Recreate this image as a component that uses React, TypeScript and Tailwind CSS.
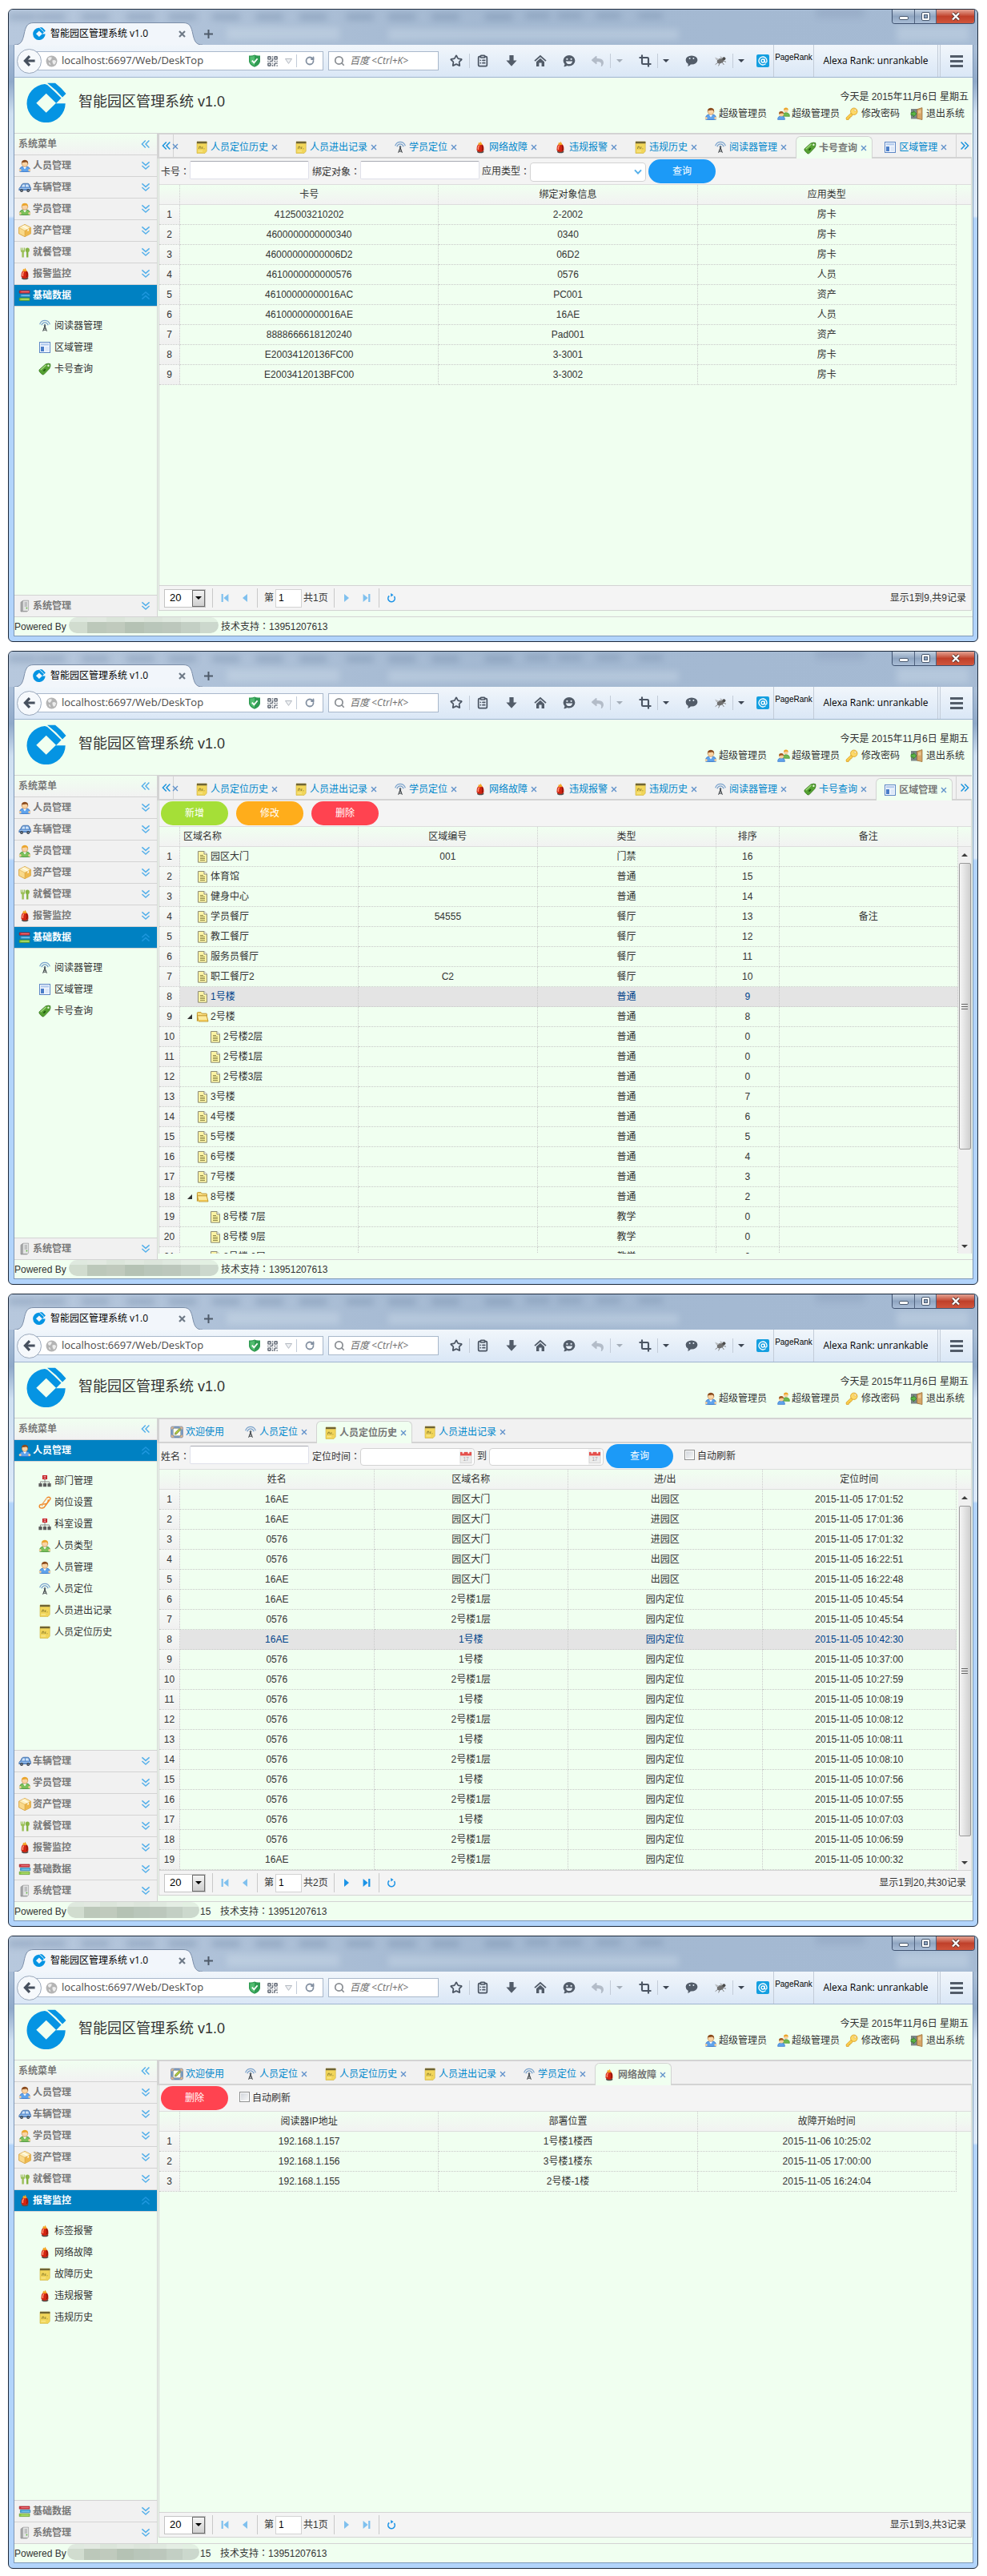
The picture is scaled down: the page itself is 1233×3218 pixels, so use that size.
import React from "react";
import { ClipboardList, Crop, QrCode, RotateCw, Search, Star, AtSign } from "lucide-react";
import { FaReply } from "react-icons/fa";

/* ---------- icons ---------- */

type Glyph = () => React.ReactElement;

const Svg = ({ children, box = "0 0 16 16", className = "size-4 shrink-0" }: { children: React.ReactNode; box?: string; className?: string }) => (
  <svg viewBox={box} className={className} fill="none" aria-hidden="true">
    {children}
  </svg>
);

const Logo = ({ className }: { className: string }) => (
  <Svg box="0 0 50 50" className={className}>
    <path
      fill="#0594e3"
      fillRule="evenodd"
      d="M23 2A24.1 24.1 0 1 0 48.7 26.3H37L43.5 19.5Q34 10 26 3ZM24.7 13.7L37 25.7L24.7 37.7L12.3 25.7Z"
    />
    <path fill="#0594e3" d="M26 .8H36Q44 7 49.5 14L45 18.5Q37 9 29 3.2Z" />
  </Svg>
);

const figure = (hair: string, body: string, edge: string): Glyph => () => (
  <Svg>
    <path d="M1.6 15.2Q1 9.6 5.4 9.2H10.6Q15 9.6 14.4 15.2Q8 16 1.6 15.2Z" fill={body} stroke={edge} strokeWidth=".8" />
    <path d="M5.8 9.2L8 12.4L10.2 9.2Z" fill="#fff" />
    <circle cx="2.2" cy="13.6" r="1.5" fill="#f5cf9f" />
    <circle cx="13.8" cy="13.6" r="1.5" fill="#f5cf9f" />
    <circle cx="8" cy="5.6" r="3.7" fill="#f9d3a3" stroke="#b9783c" strokeWidth=".5" />
    <path d="M3.9 6.4Q3.2.8 8 .7Q12.8.8 12.1 6.4Q11.6 3.8 9.8 3.6Q6 4.2 5 3.8Q4.2 4.6 3.9 6.4Z" fill={hair} />
  </Svg>
);
const UserBlue = figure("#8a4a1c", "#5fa3ec", "#2b6cc4");
const UserGreen = figure("#eba52a", "#7cc05a", "#3e8a2c");

const Users: Glyph = () => (
  <Svg>
    <circle cx="10.8" cy="3.6" r="2.8" fill="#f7cf9b" />
    <path d="M8 3.4Q8 .4 10.8.4Q13.8.4 13.6 3.6Q12 2 8 3.4Z" fill="#eba52a" />
    <path d="M7 11.2Q6.6 6.8 10.8 6.8Q15.6 6.8 15.4 11.4Z" fill="#72b850" stroke="#458f30" strokeWidth=".6" />
    <path d="M.6 15.4Q.4 11 5 11Q9.6 11 9.4 15.4Z" fill="#5fa3ec" stroke="#2b6cc4" strokeWidth=".6" />
    <circle cx="5" cy="8.4" r="3" fill="#f7cf9b" />
    <path d="M2 8.4Q1.8 5 5 5Q8.2 5 8 8.4Q6.8 6.6 2 8.4Z" fill="#a0561f" />
  </Svg>
);
const Car: Glyph = () => (
  <Svg>
    <path d="M.8 11.6Q.4 8.4 2.6 7.8L4.4 4.2Q5 3.2 7 3.2H11.6Q13 3.2 13.6 4.4L14.8 7.4Q15.8 8 15.4 11.6Z" fill="#5b8fd0" stroke="#34619c" strokeWidth=".7" />
    <path d="M4 7.6L5.4 4.6H8V7.6ZM9 4.6H12.2L13.2 7.6H9Z" fill="#cfe3f7" />
    <path d="M1.4 9.4H15" stroke="#a9cbf0" />
    <circle cx="4" cy="12" r="1.9" fill="#2e3742" />
    <circle cx="12.2" cy="12" r="1.9" fill="#2e3742" />
    <circle cx="4" cy="12" r=".7" fill="#c9d2dc" />
    <circle cx="12.2" cy="12" r=".7" fill="#c9d2dc" />
  </Svg>
);
const Box: Glyph = () => (
  <Svg>
    <path d="M8 .4L15.4 4.2V11.9L8 15.7L.6 11.9V4.2Z" fill="#f9d98a" stroke="#d39a32" strokeWidth=".8" />
    <path d="M8 .8L15 4.5L8 8.2L1 4.5Z" fill="#fdeebb" />
    <path d="M8 8.2L15 4.5V11.7L8 15.2Z" fill="#eeb84c" />
    <path d="M4.4 2.8L11.4 6.4V9L13 8.2V5.4L6 1.8Z" fill="#fffbe8" />
    <path d="M1 4.5L8 8.2L15 4.5M8 8.2V15" stroke="#d39a32" strokeWidth=".5" />
  </Svg>
);
const Cutlery: Glyph = () => (
  <Svg>
    <path d="M2.8 2.6V6Q2.8 7.8 4.4 8.2V14.4H6.8V8.2Q8.2 7.8 8.2 6V2.6H7V5.4H6.1V2.6H5V5.4H4V2.6Z" fill="#9bc058" />
    <path d="M11.2 2.4Q13.9 2.6 13.9 5.4Q13.9 7.4 12.4 8V14.4H10V8Q8.8 7.4 8.8 5.4Q8.8 2.6 11.2 2.4Z" fill="#86b344" />
  </Svg>
);
const Alarm: Glyph = () => (
  <Svg>
    <ellipse cx="8.2" cy="13.4" rx="4.2" ry="1.8" fill="#55504c" />
    <path d="M3.6 11.6Q3.2 6.2 5.6 4.2H10.4Q12.8 6.2 12.4 11.6Q11.4 14 8 14Q4.6 14 3.6 11.6Z" fill="#d32412" />
    <path d="M5.4 11Q5 7.2 6.6 5.4" stroke="#ff9474" strokeWidth="1.5" />
    <path d="M10.4 12Q11.8 8.4 10.4 5.4" stroke="#86140a" strokeWidth="1.3" />
    <path d="M5.4 4.6L6 1.8L7.4 2.8L8.4.8L10.6 4.6Q8 5.8 5.4 4.6Z" fill="#f4a321" />
  </Svg>
);
const Books: Glyph = () => (
  <Svg>
    <path d="M1.2 2H14V5.2H1.2Z" fill="#d9323c" stroke="#8e1a22" strokeWidth=".6" />
    <path d="M2.4 6.6H14.8V9.8H2.4Z" fill="#42a9dd" stroke="#1c6f9e" strokeWidth=".6" />
    <path d="M1.2 11.2H14V14.6H1.2Z" fill="#8fce3e" stroke="#4f8a1c" strokeWidth=".6" />
    <path d="M3.4 3.6H13.4M4.4 8.2H14.2M3.4 12.9H13.4" stroke="#fff" strokeWidth=".7" opacity=".55" />
  </Svg>
);
const Server: Glyph = () => (
  <Svg>
    <path d="M3 3.2L6 1.2H12.6V13.4L10.4 15H3Z" fill="#a9aaab" stroke="#7c7d7e" strokeWidth=".6" />
    <path d="M6 1.6H12.4V14H6Z" fill="#e2e3e3" />
    <path d="M7.6 4H11M7.6 6H11M7.6 8H11" stroke="#8b8c8d" strokeWidth=".8" />
    <circle cx="10.4" cy="10.6" r=".9" fill="#58b431" />
  </Svg>
);
const Antenna: Glyph = () => (
  <Svg>
    <path d="M1.6 6.2Q3.4 1.4 8 1.4Q12.6 1.4 14.4 6.2M3.8 7.2Q5.2 3.8 8 3.8Q10.8 3.8 12.2 7.2" stroke="#7ba3cc" strokeWidth="1.2" />
    <circle cx="8" cy="7.2" r="1.2" fill="#5c6a76" />
    <path d="M8 8L5.6 14.8M8 8L10.4 14.8M7 11.2H9M6.2 13.2H9.8" stroke="#3b4045" strokeWidth="1" />
  </Svg>
);
const Layout: Glyph = () => (
  <Svg>
    <rect x="1.5" y="1.5" width="13" height="13" fill="#f4f8fe" stroke="#5c86c5" />
    <path d="M3 3H13V5.6H3Z" fill="#b6cdee" />
    <path d="M3 7H7V13H3Z" fill="#4a7dc8" />
    <path d="M8.4 7H13V13H8.4Z" fill="#dde8f8" />
  </Svg>
);
const Tag: Glyph = () => (
  <Svg>
    <path d="M1.2 8.8L8.8 2Q12.4.4 14.8 1.6Q15.6 4.6 13.8 7.4L7 14.6Q5.4 15.6 4 14.2L1.4 11.4Q.4 10 1.2 8.8Z" fill="#55a132" stroke="#2f7018" strokeWidth=".7" />
    <path d="M2.6 9.2L9.6 3" stroke="#a5dc80" strokeWidth="1.3" />
    <circle cx="12.4" cy="3.8" r="1.2" fill="#e9f6e1" />
    <path d="M6.4 10.6L8.8 8.2" stroke="#225711" strokeWidth="1.8" />
  </Svg>
);
const Notes: Glyph = () => (
  <Svg>
    <path d="M2 1.2H14.2V13L12 15.4H2Z" fill="#f2d65a" stroke="#cdb03a" strokeWidth=".6" />
    <path d="M2 .8H14.4V3.2H2Z" fill="#6f6434" />
    <path d="M4.4 10L5.2 6.8M5.2 7.4Q7.4 6 6.8 9.8M8.4 10L9 7.2M10.4 9.8H11.4" stroke="#7a6d24" strokeWidth=".8" />
    <path d="M3.4 12.8H9" stroke="#fbeea0" />
  </Svg>
);
const Org: Glyph = () => (
  <Svg>
    <path d="M5 1H11V6H5Z" fill="#c3141b" />
    <path d="M6.4 2.6H9.6M6.4 4.4H9.6" stroke="#fff" strokeWidth=".7" />
    <path d="M8 6V9M2.4 11.4V9H13.6V11.4M8 9V11.4" stroke="#8a8a8a" />
    <path d="M.4 11H4.6V15.2H.4ZM5.9 11H10.1V15.2H5.9ZM11.4 11H15.6V15.2H11.4Z" fill="#5c5c5c" />
  </Svg>
);
const Clip: Glyph = () => (
  <Svg>
    <path d="M10.4 2.2Q13.2.4 14.8 2.2Q15.4 3.4 13.8 5L7.4 13.8Q4.6 16 1.8 14.4Q.4 12.4 2.4 10.6L10 9.6Q12.6 8 12.2 4.4" stroke="#f08a2c" strokeWidth="1.5" />
    <path d="M10.4 2.4L4.6 10.4Q4 12 5.4 12.2" stroke="#f2a356" strokeWidth="1.3" />
  </Svg>
);
const Welcome: Glyph = () => (
  <Svg>
    <rect x=".8" y="1.2" width="14.4" height="13.6" rx="1" fill="#7fa3cf" stroke="#47658f" strokeWidth=".8" />
    <path d="M1 1.4L5 1.4L1 5ZM15 1.4V5L11 1.4ZM1 14.6V11L5 14.6ZM15 14.6H11L15 11Z" fill="#e8b88a" />
    <rect x="3.2" y="3.2" width="9.6" height="9.6" fill="#fdfdf3" stroke="#7e7e6c" strokeWidth=".6" />
    <path d="M5.4 11L6 8.6L11 3.6L12.6 5.2L7.6 10.4Z" fill="#b4d13e" stroke="#4f5a1c" strokeWidth=".6" />
  </Svg>
);
const KeyIcon: Glyph = () => (
  <Svg>
    <path d="M7 7.4L1 13.2L1.4 15.4H4.2V13.6H6V11.8H7.6L9 9.6Z" fill="#fbd04e" stroke="#d99a1e" strokeWidth=".8" />
    <circle cx="10.8" cy="5.2" r="4.2" fill="#fcd968" stroke="#d99a1e" strokeWidth=".8" />
    <circle cx="12.2" cy="3.8" r="1.2" fill="#fff" stroke="#d99a1e" strokeWidth=".5" />
  </Svg>
);
const Door: Glyph = () => (
  <Svg>
    <path d="M1 2H12V14.4H1Z" fill="#7b8587" />
    <path d="M8.6 2.6L15 .6V15.6L8.6 14Z" fill="#d7a768" stroke="#93652c" strokeWidth=".7" />
    <path d="M10 4.2L13.4 3.2V7.4L10 7.6Z" fill="#ecc893" />
    <path d="M1 6.6H4V4.4L8 8.2L4 12V9.8H1Z" fill="#5cb648" stroke="#2c7a1d" strokeWidth=".7" />
  </Svg>
);
const Page: Glyph = () => (
  <Svg>
    <path d="M2.5 1.5H10L13.5 5V15.2H2.5Z" fill="#fbf3a4" stroke="#8c8b77" />
    <path d="M10 1.5V5H13.5" fill="#fff" stroke="#8c8b77" />
    <path d="M5 6.5H9M5 8.5H11M5 10.5H11M5 12.5H11" stroke="#8d8748" />
  </Svg>
);
const Folder: Glyph = () => (
  <Svg>
    <path d="M1.4 13.8V3.4Q1.4 2.6 2.2 2.6H6L7.4 4.2H12.6Q13.4 4.2 13.4 5V7" fill="#f8dd80" stroke="#b98a1d" strokeWidth=".9" />
    <path d="M1.4 6.8H13.2L15 14H3.2Z" fill="#fcea9c" stroke="#b98a1d" strokeWidth=".9" />
    <path d="M3 12H14L14.4 13.5H3.4Z" fill="#efc54e" />
  </Svg>
);
const DateIcon: Glyph = () => (
  <Svg>
    <rect x="1" y="2" width="14" height="13.6" fill="#ececec" stroke="#c8c8c8" strokeWidth=".6" />
    <path d="M1 2H15V6.4H1Z" fill="#e5504c" />
    <path d="M4.6.4V3.8M11.4.4V3.8" stroke="#fff" strokeWidth="1.8" />
    <text x="8" y="13.2" fontSize="6.5" textAnchor="middle" fill="#a5a5a5" fontFamily="Liberation Sans">17</text>
  </Svg>
);

const Chevrons = ({ dir, color = "#56b0ea", className = "size-3 shrink-0" }: { dir: "left" | "right" | "up" | "down"; color?: string; className?: string }) => {
  const d = {
    left: "M5.8 1.4L1.4 6L5.8 10.6M10.4 1.4L6 6L10.4 10.6",
    right: "M1.6 1.4L6 6L1.6 10.6M6.2 1.4L10.6 6L6.2 10.6",
    up: "M1.4 6L6 2L10.6 6M1.4 10.6L6 6.6L10.6 10.6",
    down: "M1.4 1.4L6 5.4L10.6 1.4M1.4 6L6 10L10.6 6",
  }[dir];
  return (
    <Svg box="0 0 12 12" className={className}>
      <path d={d} stroke={color} strokeWidth="1.5" />
    </Svg>
  );
};

/* ---------- browser frame ---------- */

const Divider = ({ className }: { className: string }) => <span className={`w-px shrink-0 bg-[#c3ccd8] ${className}`} />;

const Caret = ({ color, className }: { color: string; className: string }) => (
  <Svg box="0 0 8 8" className={`h-2 w-2 shrink-0 ${className}`}>
    <path d="M0 2H8L4 6Z" fill={color} />
  </Svg>
);

const Smudges = () => (
  <svg className="absolute inset-0 h-full w-full" viewBox="0 0 1200 44" preserveAspectRatio="none" aria-hidden="true">
    <defs>
      <filter id="haze" x="-10%" y="-100%" width="120%" height="300%">
        <feGaussianBlur stdDeviation="4" />
      </filter>
    </defs>
    <g filter="url(#haze)" fill="#5c7494" opacity=".3">
      {[0, 36, 90, 146, 198, 252, 306, 360, 418, 470, 524, 590].map((x) => (
        <rect key={x} x={x} y="5" width="34" height="8" />
      ))}
      {[640, 680, 728, 780].map((x) => (
        <rect key={x} x={x} y="4" width="30" height="7" />
      ))}
      <rect x="1000" y="-4" width="60" height="14" opacity=".5" />
    </g>
    <g filter="url(#haze)" fill="#dce8f2" opacity=".3">
      <rect x="270" y="22" width="140" height="16" />
      <rect x="470" y="24" width="360" height="14" />
      <rect x="1100" y="20" width="90" height="20" />
    </g>
  </svg>
);

const TitleBar = () => (
  <div className="relative flex h-11 items-end justify-between bg-linear-to-r from-[#b7c8dd] via-[#a3b8d1] to-[#a5bad3]">
    <Smudges />
    <div className="relative flex items-end pl-[7px]">
      <div className="relative flex h-7 w-[235px] items-center pl-[23px] pr-[21px]">
        <svg className="absolute inset-0 h-full w-full" viewBox="0 0 235 28" preserveAspectRatio="none" aria-hidden="true">
          <path
            d="M0 28C8 28 10 24 12 15C14 5 16 .5 24 .5H211C219 .5 221 5 223 15C225 24 227 28 235 28"
            fill="#f2f6fb"
            stroke="#7c8ea8"
          />
        </svg>
        <Logo className="relative size-4" />
        <span className="relative ml-[6px] flex-1 whitespace-nowrap font-['Open_Sans','Noto_Sans_CJK_SC',sans-serif] text-xs text-black">智能园区管理系统 v1.0</span>
        <button aria-label="关闭标签页" className="relative size-[9px]">
          <Svg box="0 0 9 9" className="size-[9px]">
            <path d="M1 1L8 8M8 1L1 8" stroke="#6f7a87" strokeWidth="2.2" />
          </Svg>
        </button>
      </div>
      <button aria-label="新建标签页" className="relative mb-2 ml-[2px] size-[11px]">
        <Svg box="0 0 11 11" className="size-[11px]">
          <path d="M5.5 0V11M0 5.5H11" stroke="#4e5a69" strokeWidth="2" />
        </Svg>
      </button>
    </div>
    <div className="relative mr-[3px] flex h-[18px] self-start overflow-hidden rounded-b border border-t-0 border-[#3f5270]">
      <button aria-label="最小化" className="flex w-7 items-center justify-center border-r border-[#50627e] bg-linear-to-b from-[#c3d1e1] via-[#8fa5c1] to-[#a9bdd6]">
        <span className="mt-1 h-[5px] w-3 rounded-xs border border-[#4a5a70] bg-white" />
      </button>
      <button aria-label="还原" className="flex w-[27px] items-center justify-center border-r border-[#50627e] bg-linear-to-b from-[#c3d1e1] via-[#8fa5c1] to-[#a9bdd6]">
        <span className="flex size-[11px] items-center justify-center rounded-xs border border-[#4a5a70] bg-white">
          <span className="size-[5px] border border-[#4a5a70] bg-[#8fa5c1]" />
        </span>
      </button>
      <button aria-label="关闭" className="flex w-[47px] items-center justify-center bg-linear-to-b from-[#e3a394] via-[#c0402a] to-[#d0553c]">
        <Svg box="0 0 12 11" className="h-[11px] w-3">
          <path d="M2 1.5L10 9.5M10 1.5L2 9.5" stroke="#54352f" strokeWidth="4" />
          <path d="M2 1.5L10 9.5M10 1.5L2 9.5" stroke="#fff" strokeWidth="2.4" />
        </Svg>
      </button>
    </div>
  </div>
);

const AddressBar = () => (
  <div className="flex h-[41px] items-center border-b border-[#9fb4d0] bg-linear-to-b from-[#f1f6fb] to-[#dae7f6] pl-[3px] font-['Open_Sans','Noto_Sans_CJK_SC',sans-serif] text-xs text-black">
    <button aria-label="后退" className="z-10 flex size-[31px] shrink-0 items-center justify-center rounded-full border border-[#9aa8bb] bg-[#f6f9fc]">
      <Svg>
        <path d="M8 2.2L2.4 8L8 13.8M2.8 8H14.6" stroke="#46505e" strokeWidth="3.2" />
      </Svg>
    </button>
    <div className="-ml-2 flex h-6 min-w-0 flex-1 items-center border border-[#a9b8cb] bg-white pl-3">
      <Svg className="size-[15px] shrink-0">
        <circle cx="8" cy="8" r="7.4" fill="#b4b4b4" />
        <path d="M3 4Q6 1.6 8.4 3Q7.8 6.4 5.4 7.4Q3 6.6 3 4ZM9 7Q12.6 5.4 14 8Q13 12.4 10.6 12.6Q8.4 9.8 9 7ZM4 9.6Q6.8 10 6.6 13.4Q4.4 12.6 4 9.6Z" fill="#ededed" />
      </Svg>
      <input aria-label="地址" readOnly value="localhost:6697/Web/DeskTop" className="ml-[5px] min-w-0 flex-1 bg-transparent text-[13px] text-[#4a4a4a] outline-none" />
      <Svg box="0 0 14 16" className="h-4 w-[14px] shrink-0">
        <path d="M0 1.4Q4 2 7 .4Q10 2 14 1.4V9Q13 13.4 7 15.8Q1 13.4 0 9Z" fill="#2f9a52" />
        <path d="M1.4 2.8Q4.4 3 7 1.8V14.2Q2.2 12 1.4 8.8Z" fill="#52bd70" />
        <path d="M3.8 7.6L6.4 10.4L10.6 5.2" stroke="#fff" strokeWidth="1.8" />
      </Svg>
      <QrCode className="ml-2 size-[15px] shrink-0 text-[#6e7580]" strokeWidth={2.6} />
      <Svg box="0 0 9 7" className="ml-2 h-[7px] w-[9px] shrink-0">
        <path d="M.5.5H8.5L4.5 6.4Z" fill="#eef0f2" stroke="#b3b9c1" />
      </Svg>
      <Divider className="ml-[5px] h-4" />
      <RotateCw className="mx-[10px] size-3 shrink-0 text-[#8390a1]" strokeWidth={3.6} />
    </div>
    <div className="ml-[6px] flex h-6 w-[138px] shrink-0 items-center border border-[#a9b8cb] bg-white pl-[6px]">
      <Search className="size-[14px] shrink-0 text-[#8b8f94]" strokeWidth={3} />
      <input aria-label="搜索" placeholder="百度 <Ctrl+K>" className="ml-[6px] w-full bg-transparent italic outline-none placeholder:text-[#6d6d6d]" />
    </div>
    <Star className="ml-[14px] size-4 shrink-0 text-[#4b5563]" strokeWidth={2.6} />
    <Divider className="ml-2 h-[18px]" />
    <ClipboardList className="ml-2 size-4 shrink-0 text-[#4b5563]" strokeWidth={2.6} />
    <Svg className="ml-5 size-4 shrink-0">
      <path d="M5.4 1H10.6V7.4H14.6L8 14.8L1.4 7.4H5.4Z" fill="#525c69" />
    </Svg>
    <Svg className="ml-5 size-4 shrink-0">
      <path d="M1 8.2L8 2L15 8.2" stroke="#525c69" strokeWidth="1.8" />
      <path d="M3 9.2L8 4.8L13 9.2V15H9.6V10.6H6.4V15H3Z" fill="#525c69" />
    </Svg>
    <Svg className="ml-5 size-4 shrink-0">
      <path d="M8 1A7.4 6.8 0 0 1 8 14.6Q6.6 14.6 5.4 14Q4 15.6 1.2 15Q2.6 13.6 2.4 12Q.6 10.2.6 7.8A7.4 6.8 0 0 1 8 1Z" fill="#525c69" />
      <circle cx="5.4" cy="5.8" r="1.1" fill="#e6eef8" />
      <circle cx="10.6" cy="5.8" r="1.1" fill="#e6eef8" />
      <path d="M3.8 8.4H12.2Q11.4 12 8 12Q4.6 12 3.8 8.4Z" fill="#e6eef8" />
    </Svg>
    <FaReply className="ml-5 size-[15px] shrink-0 text-[#b3bcc8]" />
    <Divider className="ml-2 h-[18px]" />
    <Caret color="#a4adb8" className="ml-[7px]" />
    <Crop className="ml-5 size-4 shrink-0 text-[#4b5563]" strokeWidth={3.2} />
    <Divider className="ml-[7px] h-[18px]" />
    <Caret color="#3c4552" className="ml-[6px]" />
    <Svg className="ml-5 size-4 shrink-0">
      <path d="M8 1.4A7.4 5.6 0 0 1 8 12.6L6.8 12.6Q5.6 14.6 3.2 15Q4 13.4 3.6 11.8Q.6 10 .6 7A7.4 5.6 0 0 1 8 1.4Z" fill="#525c69" />
      <circle cx="5.6" cy="5" r="1" fill="#dfe9f5" />
      <circle cx="10.4" cy="5" r="1" fill="#dfe9f5" />
    </Svg>
    <Svg className="ml-5 size-4 shrink-0">
      <ellipse cx="8" cy="8" rx="4.4" ry="3" transform="rotate(-25 8 8)" fill="#6f6f6f" />
      <circle cx="12.4" cy="5.2" r="2" fill="#4c4c4c" />
      <path d="M7 6L1 3.6L3 7.2ZM8 6L7.6 2L11 4Z" fill="#b9bcc0" />
      <path d="M5 10L1.6 12.6M7 11L5.6 14.4M10 9.6L12.4 13M12 8L15 9.4" stroke="#777" strokeWidth=".9" />
    </Svg>
    <Divider className="ml-[7px] h-[18px]" />
    <Caret color="#3c4552" className="ml-[6px]" />
    <span className="ml-[15px] flex size-4 shrink-0 items-center justify-center rounded-xs bg-[#149fe0]">
      <AtSign className="size-3 text-white" strokeWidth={2.6} />
    </span>
    <Divider className="ml-[5px] h-full" />
    <span className="mb-2 w-[49px] shrink-0 text-center font-['Liberation_Sans',sans-serif] text-[10px] leading-3">PageRank</span>
    <Divider className="h-full" />
    <span className="w-[154px] shrink-0 whitespace-nowrap text-center">Alexa Rank: unrankable</span>
    <Divider className="mr-[2px] h-full" />
    <Divider className="h-full" />
    <button aria-label="菜单" className="mx-[12px] flex w-4 shrink-0 flex-col gap-[3px]">
      <span className="h-[3px] bg-[#525c69]" />
      <span className="h-[3px] bg-[#525c69]" />
      <span className="h-[3px] bg-[#525c69]" />
    </button>
  </div>
);

/* ---------- application shell ---------- */

/* Full-width colon centred in its cell. */
const Colon = () => <span className="font-['Noto_Sans_CJK_JP',sans-serif]" lang="ja">：</span>;

const MENU: { name: string; icon: Glyph }[] = [
  { name: "人员管理", icon: UserBlue },
  { name: "车辆管理", icon: Car },
  { name: "学员管理", icon: UserGreen },
  { name: "资产管理", icon: Box },
  { name: "就餐管理", icon: Cutlery },
  { name: "报警监控", icon: Alarm },
  { name: "基础数据", icon: Books },
  { name: "系统管理", icon: Server },
];

type Item = { name: string; icon: Glyph };

const MenuRow = ({ item, state }: { item: Item; state: "above" | "active" | "below" }) => (
  <button
    className={
      state === "active"
        ? "flex h-[27px] w-full items-center border-b border-[#d3d3d3] bg-[#0081c2] pl-[5px] pr-2 text-white"
        : state === "above"
          ? "flex h-[27px] w-full items-center border-b border-[#d3d3d3] bg-[#f1f1f1] pl-[5px] pr-2 text-[#777]"
          : "flex h-[27px] w-full items-center border-t border-[#d3d3d3] bg-[#f1f1f1] pl-[5px] pr-2 text-[#777]"
    }
  >
    <item.icon />
    <span className="ml-[2px] flex-1 text-left font-bold">{item.name}</span>
    {state === "active" ? <Chevrons dir="up" color="#1e97de" /> : <Chevrons dir="down" />}
  </button>
);

const Sidebar = ({ active, links }: { active: string; links: Item[] }) => {
  const at = MENU.findIndex((m) => m.name === active);
  return (
    <nav className="flex w-[179px] shrink-0 flex-col border-r border-t border-[#d3d3d3]">
      <div className="flex h-[27px] items-center justify-between border-b border-[#d3d3d3] bg-linear-to-b from-[#f0fff0] to-[#f2f2f2] pl-[5px] pr-2 font-bold text-[#777]">
        系统菜单
        <Chevrons dir="left" />
      </div>
      {MENU.slice(0, at + 1).map((m, i) => (
        <MenuRow key={m.name} item={m} state={i === at ? "active" : "above"} />
      ))}
      <div className="flex flex-1 flex-col pt-[10px]">
        {links.map((l) => (
          <a key={l.name} href="#" className="flex h-[27px] items-center pl-[30px]">
            <l.icon />
            <span className="ml-1">{l.name}</span>
          </a>
        ))}
      </div>
      {MENU.slice(at + 1).map((m) => (
        <MenuRow key={m.name} item={m} state="below" />
      ))}
    </nav>
  );
};

type TabDef = { name: string; icon: Glyph; fixed?: boolean };

const CloseMark = () => (
  <button aria-label="关闭" className="ml-1 size-2 shrink-0">
    <Svg box="0 0 8 8" className="size-2">
      <path d="M1 1L7 7M7 1L1 7" stroke="#5d8fc9" strokeWidth="1.3" />
    </Svg>
  </button>
);

const Tab = ({ tab, active }: { tab: TabDef; active: boolean }) => (
  <div
    className={
      active
        ? "-mb-[2px] flex h-7 shrink-0 items-center rounded-t-md border border-b-0 border-[#d3d3d3] bg-[#f0fff0] pl-[9px] pr-[6px] font-bold text-[#777]"
        : "flex h-[26px] shrink-0 items-center border border-b-0 border-transparent pl-[9px] pr-[6px] text-[#0088cc]"
    }
  >
    <button className="flex items-center whitespace-nowrap">
      <tab.icon />
      <span className="ml-[3px]">{tab.name}</span>
    </button>
    {tab.fixed ? <span className="w-1" /> : <CloseMark />}
  </div>
);

const TabStrip = ({ tabs, active, scrolled }: { tabs: TabDef[]; active: string; scrolled?: boolean }) => (
  <div className="flex h-8 border-b-2 border-l-2 border-t-2 border-[#d3d3d3] bg-[#f1f1f1]">
    {scrolled && (
      <>
        <button aria-label="向左滚动" className="flex w-[18px] shrink-0 items-center justify-center border-r border-[#d3d3d3]">
          <Chevrons dir="left" color="#1a93dd" />
        </button>
        {/* tail end of the tab that is scrolled out on the left */}
        <div className="flex h-[26px] w-[13px] shrink-0 items-center justify-end self-end pr-[7px]">
          <CloseMark />
        </div>
      </>
    )}
    <div className="ml-1 flex min-w-0 flex-1 items-end gap-1">
      {tabs.map((t) => (
        <Tab key={t.name} tab={t} active={t.name === active} />
      ))}
    </div>
    {scrolled && (
      <button aria-label="向右滚动" className="flex w-5 shrink-0 items-center justify-center border-l border-[#d3d3d3]">
        <Chevrons dir="right" color="#1a93dd" />
      </button>
    )}
  </div>
);

const Mosaic = ({ width }: { width: "long" | "short" }) => (
  <span
    className={
      width === "long"
        ? "-mt-1 ml-[2px] flex h-5 w-[187px] shrink-0 flex-col overflow-hidden rounded-full"
        : "-mt-1 flex h-5 w-[165px] shrink-0 flex-col overflow-hidden rounded-full"
    }
  >
    <span className="flex h-[6px]">
      {["bg-[#dfe9df]", "bg-[#e2e9e1]", "bg-[#dbe5da]", "bg-[#e0e8df]", "bg-[#dce5db]", "bg-[#dfe9df]", "bg-[#e4eee4]", "bg-[#e2f0e2]"].map((c, i) => (
        <span key={i} className={`flex-1 ${c}`} />
      ))}
    </span>
    <span className="flex flex-1">
      {["bg-[#d1dccf]", "bg-[#bcc8ba]", "bg-[#c0cabd]", "bg-[#b5c2b4]", "bg-[#b9c6ba]", "bg-[#bcc7bc]", "bg-[#c3cfc4]", "bg-[#ccd8cd]"].map((c, i) => (
        <span key={i} className={`flex-1 ${c}`} />
      ))}
    </span>
  </span>
);

const AppHeader = () => (
  <header className="flex h-[69px] justify-between pl-[15px] pr-[5px]">
    <div className="flex">
      <Logo className="mt-[6px] size-[50px]" />
      <h1 className="ml-[15px] mt-[18px] text-lg leading-6 text-[#333]">智能园区管理系统 v1.0</h1>
    </div>
    <div className="flex flex-col items-end pt-[14px]">
      <span className="leading-5">今天是 2015年11月6日 星期五</span>
      <div className="mr-[5px] mt-[1px] flex h-5 items-center">
        <span className="flex items-center gap-[2px]"><UserBlue />超级管理员</span>
        <span className="ml-[13px] flex items-center gap-[2px]"><Users />超级管理员</span>
        <a href="#" className="ml-[7px] flex items-center gap-1"><KeyIcon />修改密码</a>
        <a href="#" className="ml-[13px] flex items-center gap-1"><Door />退出系统</a>
      </div>
    </div>
  </header>
);

type ScreenProps = {
  menu: string;
  links: Item[];
  tabs: TabDef[];
  tab: string;
  scrolled?: boolean;
  yearShown?: boolean;
  children: React.ReactNode;
};

const Screen = ({ menu, links, tabs, tab, scrolled, yearShown, children }: ScreenProps) => (
  <section className="overflow-hidden rounded-md border border-[#1d2a3c] bg-[linear-gradient(#a8bdd6_0,#a8bdd6_50px,#8fa9c9_90px,#cfe0f1_130px,#dceafa_258px,#b2d4fb_261px)]">
    <TitleBar />
    <div className="mb-[6px] ml-[6px] mr-[5px] border border-[#7f98b8]">
      <div className="-mt-px">
        <AddressBar />
      </div>
      <div className="bg-[#f0fff0]">
        <AppHeader />
        <div className="flex min-h-[604px]">
          <Sidebar active={menu} links={links} />
          <main className="mr-px flex min-w-0 flex-1 flex-col">
            <TabStrip tabs={tabs} active={tab} scrolled={scrolled} />
            {children}
          </main>
        </div>
        <footer className="flex h-6 items-center whitespace-nowrap border-t border-[#d3d3d3]">
          <span className="w-[66px] shrink-0">Powered By</span>
          <Mosaic width={yearShown ? "short" : "long"} />
          {yearShown ? <span className="ml-[1px] w-[25px]">15</span> : <span className="w-[3px]" />}
          <span>技术支持<Colon />13951207613</span>
        </footer>
      </div>
    </div>
  </section>
);

/* ---------- toolbar widgets ---------- */

const Toolbar = ({ children }: { children: React.ReactNode }) => (
  <div className="flex h-[33px] items-center border-b border-[#ddd] bg-[#f4f4f4] pl-[2px]">{children}</div>
);

const ActionButton = ({ tone, children }: { tone: "blue" | "green" | "orange" | "red"; children: string }) => {
  const fill = { blue: "bg-[#1c9af7]", green: "bg-[#a5df37]", orange: "bg-[#ffad1b]", red: "bg-[#ff4350]" }[tone];
  return <button className={`h-[30px] w-[84px] shrink-0 rounded-[15px] text-white ${fill}`}>{children}</button>;
};

const TextField = ({ label }: { label: string }) => (
  <label className="flex shrink-0 items-center">
    <span>{label}<Colon /></span>
    <input type="text" className="-mt-1 h-[23px] w-[149px] rounded-xs border border-[#dfe0ea] border-t-[#a9abb3] bg-white px-1 outline-none" />
  </label>
);

const DateField = ({ label, colon }: { label: string; colon?: boolean }) => (
  <label className="flex shrink-0 items-center">
    <span className={colon ? "" : "mr-[3px]"}>{label}{colon && <Colon />}</span>
    <span className="mt-[2px] flex h-[22px] w-[143px] items-center rounded border border-[#d3d3d3] bg-white pr-[2px]">
      <input type="text" className="min-w-0 flex-1 bg-transparent px-1 outline-none" />
      <span className="flex h-full items-center bg-[#f5f5f5]"><DateIcon /></span>
    </span>
  </label>
);

const AutoRefresh = () => (
  <label className="ml-[14px] flex shrink-0 items-center gap-[3px]">
    <input type="checkbox" className="-mt-1 size-[13px] appearance-none border border-[#8e8f8f] bg-linear-to-br from-[#cfd3d9] to-[#fafafa] shadow-[inset_0_0_0_1px_#fff]" />
    自动刷新
  </label>
);

/* ---------- grid ---------- */

type Column = { title: string; width?: string; left?: boolean };
type Row = { cells: React.ReactNode[]; selected?: boolean };

const Grid = ({ columns, rows, clip, edge, scroll }: { columns: Column[]; rows: Row[]; clip?: boolean; edge: "w-[18px]" | "w-4"; scroll?: "tall" | "short" }) => (
  <div className={clip ? "flex h-[533px] overflow-hidden" : "flex flex-1"}>
    <div className="min-w-0 flex-1">
      <table className="w-full table-fixed border-separate border-spacing-0 text-center leading-4">
        <colgroup>
          <col className="w-[26px]" />
          {columns.map((c) => (
            <col key={c.title} className={c.width} />
          ))}
        </colgroup>
        <thead>
          <tr className="bg-linear-to-b from-[#f0fff0] to-[#f2f2f2]">
            <th className="h-[25px] border-b border-r border-b-[#ddd] border-r-[#ccc] p-0 [border-right-style:dotted]" />
            {columns.map((c) => (
              <th
                key={c.title}
                className={`h-[25px] border-b border-r border-b-[#ddd] border-r-[#ccc] px-1 py-0 font-normal [border-right-style:dotted] ${c.left ? "text-left" : "text-center"}`}
              >
                {c.title}
              </th>
            ))}
          </tr>
        </thead>
        <tbody>
          {rows.map((r, i) => (
            <tr key={i}>
              <td className="h-[25px] border-b border-r border-dotted border-[#c8c8c8] bg-linear-to-b from-[#f6faf6] to-[#f0f0f0] p-0">{i + 1}</td>
              {r.cells.map((c, j) => (
                <td
                  key={j}
                  className={`h-[25px] overflow-hidden whitespace-nowrap border-b border-r border-dotted border-[#c8c8c8] px-1 py-0 ${columns[j].left ? "text-left" : "text-center"} ${r.selected ? "bg-[#e4e4e4] text-[#00438a]" : ""}`}
                >
                  {c}
                </td>
              ))}
            </tr>
          ))}
        </tbody>
      </table>
    </div>
    <div className={`flex shrink-0 flex-col ${edge}`}>
      <div className="h-[25px] border-b border-[#ddd] bg-linear-to-b from-[#f0fff0] to-[#f2f2f2]" />
      {scroll && (
        <div className="ml-auto flex w-4 flex-1 flex-col items-center bg-[#f0f0f0]">
          <Svg box="0 0 8 8" className="my-[6px] size-2">
            <path d="M0 6H8L4 2Z" fill="#3c3c3c" />
          </Svg>
          <div
            className={
              scroll === "tall"
                ? "flex w-[15px] flex-[415] flex-col items-center justify-center gap-[2px] rounded-xs border border-[#9a9a9a] bg-linear-to-r from-[#f5f5f5] to-[#cfcfcf]"
                : "flex w-[15px] flex-[358] flex-col items-center justify-center gap-[2px] rounded-xs border border-[#9a9a9a] bg-linear-to-r from-[#f5f5f5] to-[#cfcfcf]"
            }
          >
            <span className="h-px w-2 bg-[#666]" />
            <span className="h-px w-2 bg-[#666]" />
            <span className="h-px w-2 bg-[#666]" />
          </div>
          <div className={scroll === "tall" ? "flex-[24]" : "flex-[112]"} />
          <Svg box="0 0 8 8" className="my-[5px] size-2">
            <path d="M0 2H8L4 6Z" fill="#3c3c3c" />
          </Svg>
        </div>
      )}
    </div>
  </div>
);

const PagerRule = () => <span className="h-6 w-px shrink-0 bg-[#c9c9c9]" />;

const Pager = ({ pages, info, more }: { pages: number; info: string; more?: boolean }) => {
  const ahead = more ? "#1b93e6" : "#7fc0ee";
  return (
    <div className="flex h-8 items-center border-b border-t border-[#d3d3d3] bg-[#f4f4f4] pl-[6px] pr-[6px]">
      <div className="relative h-[23px] w-[52px] shrink-0">
        <select aria-label="每页条数" className="h-full w-full appearance-none border border-[#c4c4c4] bg-white pl-[6px] text-[13px] text-black">
          <option>20</option>
        </select>
        <span className="pointer-events-none absolute inset-y-px right-px flex w-4 items-center justify-center border border-[#6d6d6d] bg-linear-to-b from-[#f4f4f4] to-[#cfcfcf]">
          <Caret color="#000" className="" />
        </span>
      </div>
      <span className="w-2" />
      <PagerRule />
      <button aria-label="首页" className="ml-[10px]">
        <Svg box="0 0 10 12" className="h-3 w-[10px]">
          <path d="M.6 1H2.8V11H.6ZM9.4 1V11L3.4 6Z" fill="#7fc0ee" />
        </Svg>
      </button>
      <button aria-label="上一页" className="ml-4">
        <Svg box="0 0 8 12" className="h-3 w-2">
          <path d="M7 1V11L1 6Z" fill="#7fc0ee" />
        </Svg>
      </button>
      <span className="w-[11px]" />
      <PagerRule />
      <label className="ml-2 flex items-center gap-[2px]">
        第
        <input type="text" defaultValue="1" className="h-[23px] w-[33px] border border-[#d3d3d3] bg-white px-[3px] text-black outline-none" />
      </label>
      <span className="ml-[2px] w-[38px] whitespace-nowrap">共{pages}页</span>
      <PagerRule />
      <button aria-label="下一页" className="ml-[11px]">
        <Svg box="0 0 8 12" className="h-3 w-2">
          <path d="M1 1V11L7 6Z" fill={ahead} />
        </Svg>
      </button>
      <button aria-label="末页" className="ml-4">
        <Svg box="0 0 10 12" className="h-3 w-[10px]">
          <path d="M.6 1V11L6.6 6ZM7.2 1H9.4V11H7.2Z" fill={ahead} />
        </Svg>
      </button>
      <span className="w-[10px]" />
      <PagerRule />
      <button aria-label="刷新" className="ml-[9px]">
        <Svg box="0 0 12 12" className="size-3">
          <path d="M3.2 3.4A4.2 4.2 0 1 0 9.4 4" stroke="#1b93e6" strokeWidth="1.6" />
          <path d="M5.2 0L8.6 2.3L5.2 4.6Z" fill="#1b93e6" />
        </Svg>
      </button>
      <span className="ml-auto">{info}</span>
    </div>
  );
};

/* Grid area bordered on both sides, with the strip of page colour under it. */
const Panel = ({ children }: { children: React.ReactNode }) => (
  <div className="mb-[7px] ml-px flex flex-1 flex-col border-l border-r border-[#d3d3d3]">{children}</div>
);

/* ---------- data ---------- */

const baseLinks: Item[] = [
  { name: "阅读器管理", icon: Antenna },
  { name: "区域管理", icon: Layout },
  { name: "卡号查询", icon: Tag },
];

const baseTabs: TabDef[] = [
  { name: "人员定位历史", icon: Notes },
  { name: "人员进出记录", icon: Notes },
  { name: "学员定位", icon: Antenna },
  { name: "网络故障", icon: Alarm },
  { name: "违规报警", icon: Alarm },
  { name: "违规历史", icon: Notes },
  { name: "阅读器管理", icon: Antenna },
  { name: "卡号查询", icon: Tag },
  { name: "区域管理", icon: Layout },
];

const peopleTabs: TabDef[] = [
  { name: "欢迎使用", icon: Welcome, fixed: true },
  { name: "人员定位", icon: Antenna },
  { name: "人员定位历史", icon: Notes },
  { name: "人员进出记录", icon: Notes },
];

const cards: string[][] = [
  ["4125003210202", "2-2002", "房卡"],
  ["4600000000000340", "0340", "房卡"],
  ["46000000000006D2", "06D2", "房卡"],
  ["4610000000000576", "0576", "人员"],
  ["46100000000016AC", "PC001", "资产"],
  ["46100000000016AE", "16AE", "人员"],
  ["8888666618120240", "Pad001", "资产"],
  ["E20034120136FC00", "3-3001", "房卡"],
  ["E2003412013BFC00", "3-3002", "房卡"],
];

type Area = [name: string, code: string, kind: string, order: string, note: string, depth: number, open?: boolean];

const areas: Area[] = [
  ["园区大门", "001", "门禁", "16", "", 0],
  ["体育馆", "", "普通", "15", "", 0],
  ["健身中心", "", "普通", "14", "", 0],
  ["学员餐厅", "54555", "餐厅", "13", "备注", 0],
  ["教工餐厅", "", "餐厅", "12", "", 0],
  ["服务员餐厅", "", "餐厅", "11", "", 0],
  ["职工餐厅2", "C2", "餐厅", "10", "", 0],
  ["1号楼", "", "普通", "9", "", 0],
  ["2号楼", "", "普通", "8", "", 0, true],
  ["2号楼2层", "", "普通", "0", "", 1],
  ["2号楼1层", "", "普通", "0", "", 1],
  ["2号楼3层", "", "普通", "0", "", 1],
  ["3号楼", "", "普通", "7", "", 0],
  ["4号楼", "", "普通", "6", "", 0],
  ["5号楼", "", "普通", "5", "", 0],
  ["6号楼", "", "普通", "4", "", 0],
  ["7号楼", "", "普通", "3", "", 0],
  ["8号楼", "", "普通", "2", "", 0, true],
  ["8号楼 7层", "", "教学", "0", "", 1],
  ["8号楼 9层", "", "教学", "0", "", 1],
  ["8号楼 6层", "", "教学", "0", "", 1],
];

const AreaName = ({ name, depth, open }: { name: string; depth: number; open?: boolean }) => (
  <span className={depth ? "flex items-center pl-4" : "flex items-center"}>
    <span className="flex w-4 shrink-0 justify-center">
      {open && (
        <Svg box="0 0 8 8" className="size-2">
          <path d="M7 1V7H1Z" fill="#333" />
        </Svg>
      )}
    </span>
    {open ? <Folder /> : <Page />}
    <span className="ml-[2px]">{name}</span>
  </span>
);

const tracks: string[][] = [
  ["16AE", "园区大门", "出园区", "17:01:52"],
  ["16AE", "园区大门", "进园区", "17:01:36"],
  ["0576", "园区大门", "进园区", "17:01:32"],
  ["0576", "园区大门", "出园区", "16:22:51"],
  ["16AE", "园区大门", "出园区", "16:22:48"],
  ["16AE", "2号楼1层", "园内定位", "10:45:54"],
  ["0576", "2号楼1层", "园内定位", "10:45:54"],
  ["16AE", "1号楼", "园内定位", "10:42:30"],
  ["0576", "1号楼", "园内定位", "10:37:00"],
  ["0576", "2号楼1层", "园内定位", "10:27:59"],
  ["0576", "1号楼", "园内定位", "10:08:19"],
  ["0576", "2号楼1层", "园内定位", "10:08:12"],
  ["0576", "1号楼", "园内定位", "10:08:11"],
  ["0576", "2号楼1层", "园内定位", "10:08:10"],
  ["0576", "1号楼", "园内定位", "10:07:56"],
  ["0576", "2号楼1层", "园内定位", "10:07:55"],
  ["0576", "1号楼", "园内定位", "10:07:03"],
  ["0576", "2号楼1层", "园内定位", "10:06:59"],
  ["16AE", "2号楼1层", "园内定位", "10:00:32"],
];

/* ---------- page ---------- */

export default function App() {
  return (
    <div className="flex flex-col gap-[11px] bg-white pb-[10px] pl-[10px] pr-[11px] pt-[11px] font-['Liberation_Sans','Noto_Sans_CJK_SC',sans-serif] text-xs text-[#333]">
      <Screen menu="基础数据" links={baseLinks} tabs={baseTabs} tab="卡号查询" scrolled>
        <Panel>
          <Toolbar>
            <TextField label="卡号" />
            <span className="w-1" />
            <TextField label="绑定对象" />
            <label className="ml-[3px] flex shrink-0 items-center">
              应用类型<Colon />
              <span className="relative mt-[2px] block h-6 w-[145px]">
                <select className="h-full w-full appearance-none rounded border border-[#d3d3d3] bg-white px-1">
                  <option />
                </select>
                <Svg box="0 0 10 8" className="pointer-events-none absolute right-[5px] top-2 h-2 w-[10px]">
                  <path d="M1 1.4L5 5.6L9 1.4" stroke="#56b0ea" strokeWidth="2" />
                </Svg>
              </span>
            </label>
            <span className="w-[3px]" />
            <ActionButton tone="blue">查询</ActionButton>
          </Toolbar>
          <Grid
            edge="w-[18px]"
            columns={[{ title: "卡号" }, { title: "绑定对象信息" }, { title: "应用类型" }]}
            rows={cards.map((cells) => ({ cells }))}
          />
          <Pager pages={1} info="显示1到9,共9记录" />
        </Panel>
      </Screen>

      <Screen menu="基础数据" links={baseLinks} tabs={baseTabs} tab="区域管理" scrolled>
        <Panel>
          <Toolbar>
            <div className="flex gap-[10px]">
              <ActionButton tone="green">新增</ActionButton>
              <ActionButton tone="orange">修改</ActionButton>
              <ActionButton tone="red">删除</ActionButton>
            </div>
          </Toolbar>
          <Grid
            edge="w-4"
            clip
            scroll="short"
            columns={[
              { title: "区域名称", left: true },
              { title: "区域编号" },
              { title: "类型" },
              { title: "排序", width: "w-[79px]" },
              { title: "备注" },
            ]}
            rows={areas.map(([name, code, kind, order, note, depth, open]) => ({
              selected: name === "1号楼",
              cells: [<AreaName name={name} depth={depth} open={open} />, code, kind, order, note],
            }))}
          />
        </Panel>
      </Screen>

      <Screen
        menu="人员管理"
        yearShown
        links={[
          { name: "部门管理", icon: Org },
          { name: "岗位设置", icon: Clip },
          { name: "科室设置", icon: Org },
          { name: "人员类型", icon: UserGreen },
          { name: "人员管理", icon: UserBlue },
          { name: "人员定位", icon: Antenna },
          { name: "人员进出记录", icon: Notes },
          { name: "人员定位历史", icon: Notes },
        ]}
        tabs={peopleTabs}
        tab="人员定位历史"
      >
        <Panel>
          <Toolbar>
            <TextField label="姓名" />
            <span className="w-1" />
            <DateField label="定位时间" colon />
            <span className="w-[3px]" />
            <DateField label="到" />
            <span className="w-[3px]" />
            <ActionButton tone="blue">查询</ActionButton>
            <AutoRefresh />
          </Toolbar>
          <Grid
            edge="w-[18px]"
            scroll="tall"
            columns={[{ title: "姓名" }, { title: "区域名称" }, { title: "进/出" }, { title: "定位时间" }]}
            rows={tracks.map(([who, where, way, time], i) => ({ selected: i === 7, cells: [who, where, way, `2015-11-05 ${time}`] }))}
          />
          <Pager pages={2} info="显示1到20,共30记录" more />
        </Panel>
      </Screen>

      <Screen
        menu="报警监控"
        yearShown
        links={[
          { name: "标签报警", icon: Alarm },
          { name: "网络故障", icon: Alarm },
          { name: "故障历史", icon: Notes },
          { name: "违规报警", icon: Alarm },
          { name: "违规历史", icon: Notes },
        ]}
        tabs={[...peopleTabs, { name: "学员定位", icon: Antenna }, { name: "网络故障", icon: Alarm }]}
        tab="网络故障"
      >
        <Panel>
          <Toolbar>
            <ActionButton tone="red">删除</ActionButton>
            <AutoRefresh />
          </Toolbar>
          <Grid
            edge="w-[18px]"
            columns={[{ title: "阅读器IP地址" }, { title: "部署位置" }, { title: "故障开始时间" }]}
            rows={[
              { cells: ["192.168.1.157", "1号楼1楼西", "2015-11-06 10:25:02"] },
              { cells: ["192.168.1.156", "3号楼1楼东", "2015-11-05 17:00:00"] },
              { cells: ["192.168.1.155", "2号楼-1楼", "2015-11-05 16:24:04"] },
            ]}
          />
          <Pager pages={1} info="显示1到3,共3记录" />
        </Panel>
      </Screen>
    </div>
  );
}
